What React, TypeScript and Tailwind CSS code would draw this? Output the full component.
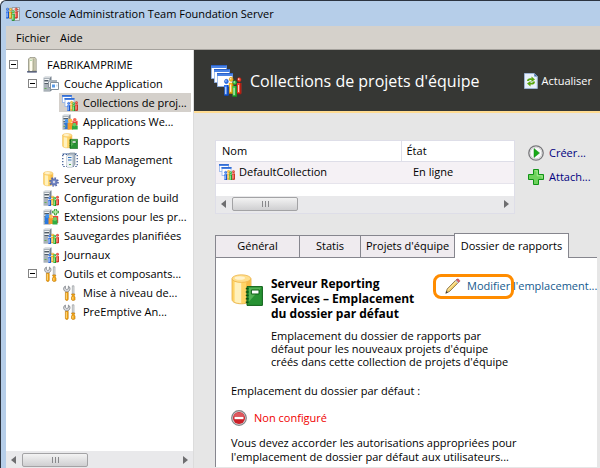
import { useState, ReactNode } from "react";
import clsx from "clsx";

type IconName =
  | "computer"
  | "tier"
  | "collections"
  | "webapps"
  | "reports"
  | "lab"
  | "proxy"
  | "build"
  | "extensions"
  | "tools";

interface TreeNode {
  label: string;
  icon: IconName;
  level: 0 | 1 | 2;
  expandable?: boolean;
}

const NODES: TreeNode[] = [
  { label: "FABRIKAMPRIME", icon: "computer", level: 0, expandable: true },
  { label: "Couche Application", icon: "tier", level: 1, expandable: true },
  { label: "Collections de proj...", icon: "collections", level: 2 },
  { label: "Applications We...", icon: "webapps", level: 2 },
  { label: "Rapports", icon: "reports", level: 2 },
  { label: "Lab Management", icon: "lab", level: 2 },
  { label: "Serveur proxy", icon: "proxy", level: 1 },
  { label: "Configuration de build", icon: "build", level: 1 },
  { label: "Extensions pour les pr...", icon: "extensions", level: 1 },
  { label: "Sauvegardes planifiées", icon: "build", level: 1 },
  { label: "Journaux", icon: "build", level: 1 },
  { label: "Outils et composants...", icon: "tools", level: 1, expandable: true },
  { label: "Mise à niveau de...", icon: "tools", level: 2 },
  { label: "PreEmptive An...", icon: "tools", level: 2 },
];

const TABS = [
  { label: "Général", width: "w-[84px]" },
  { label: "Statis", width: "w-[61px]" },
  { label: "Projets d'équipe", width: "w-[94px]" },
  { label: "Dossier de rapports", width: "w-[115px]" },
];

const INDENT = { 0: "pl-[3px]", 1: "pl-[22px]", 2: "pl-[41px]" };

// Small "i" shaped figure, 3 wide and 9 high
function Person({ x, y, fill, dark }: { x: number; y: number; fill: string; dark: string }) {
  return (
    <g transform={`translate(${x} ${y})`}>
      <path d="M0 3.2h2.8V9H.2V4.8H0z" fill={fill} />
      <path d="M2.4 3.2V9H.2" fill="none" stroke={dark} strokeWidth=".7" />
      <path d="M1.1 4.2v4" stroke="#fff" strokeOpacity=".75" strokeWidth=".7" />
      <circle cx="1.5" cy="1.3" r="1.2" fill={fill} stroke={dark} strokeWidth=".3" />
      <circle cx="1.2" cy="1" r=".45" fill="#fff" fillOpacity=".8" />
    </g>
  );
}

function Trio({ x = 5, y = 6 }: { x?: number; y?: number }) {
  return (
    <g transform={`translate(${x} ${y})`}>
      <Person x={2.9} y={0} fill="#f7b41c" dark="#d08600" />
      <Person x={0} y={0.9} fill="#2f74f0" dark="#0b43b0" />
      <Person x={7.8} y={0.2} fill="#f0402c" dark="#b01c10" />
      <Person x={5} y={1.2} fill="#3fc746" dark="#138321" />
    </g>
  );
}

function Tower() {
  return (
    <g>
      <path d="M.5 1.5H7v14.2H.5z" fill="#a9b1b8" />
      <path d="M2 .3h6.5L7 1.5H.5z" fill="#d5dade" />
      <path d="M7 1.5 8.5.3v14L7 15.7z" fill="#788490" />
      <path d="M1.5 3.5H6M1.5 6.5H6" stroke="#f3f5f6" />
      <path d="M1.5 4.5H6M1.5 7.5H6" stroke="#515c67" />
      <path d="M1.5 12.5h2" stroke="#64ac58" />
    </g>
  );
}

function Barrel() {
  return (
    <g>
      <path d="M.5 2.3v10.4c0 1.4 2.1 2.2 4.7 2.2s4.8-.8 4.8-2.2V2.3z" fill="#ffd466" stroke="#e5ad45" strokeWidth=".4" />
      <path d="M1.8 4v9.9c.9.5 2.2.7 3.3.7V4.2z" fill="#fff1bd" />
      <path d="M7.6 4.2v10.1c1.2-.3 2.1-.8 2.1-1.5V3z" fill="#f8ba48" />
      <ellipse cx="5.2" cy="2.3" rx="4.7" ry="1.9" fill="#ffdf8d" stroke="#eeb54c" strokeWidth=".4" />
      <ellipse cx="4.4" cy="2" rx="2.6" ry=".9" fill="#fff3cf" />
    </g>
  );
}

function Book() {
  return (
    <g>
      <path d="M8 6.3h7.7v9.4H8z" fill="#279233" stroke="#0d6017" strokeWidth=".5" />
      <path d="M9 6.8h6.2l-6.2 7z" fill="#73c76c" fillOpacity=".6" />
      <path d="M10.2 8h3.8v2h-3.8z" fill="#fff" stroke="#0d6017" strokeWidth=".5" />
      <path d="M7.4 7.3h1.4M7.4 9h1.4M7.4 10.7h1.4M7.4 12.4h1.4M7.4 14.1h1.4" stroke="#075411" strokeWidth=".7" />
    </g>
  );
}

function Sheet({ x, y, w, h, bar }: { x: number; y: number; w: number; h: number; bar: number }) {
  return (
    <g transform={`translate(${x} ${y})`}>
      <rect x=".4" y=".4" width={w} height={h} fill="#fff" stroke="#8fb2ea" strokeWidth=".8" />
      <rect width={w + 0.8} height={bar} fill="#4a83e4" />
      <rect width={w + 0.8} height={bar / 3} fill="#2c62c8" />
    </g>
  );
}

const ICONS: Record<IconName, ReactNode> = {
  computer: (
    <>
      <path d="M3.2 14h9.6v1.6H3.2z" fill="#4a5578" />
      <path d="M4.5 2 6 .4h5L12.2 2v12H4.5z" fill="#d7d5bd" stroke="#848472" strokeWidth=".7" />
      <path d="M6 2h2v12H6z" fill="#fffdf0" />
      <path d="M9.8 1.5v12.4" stroke="#a5a68e" strokeWidth="1.1" />
      <path d="M6.3 3.2h1.4" stroke="#64ad65" />
    </>
  ),
  tier: (
    <>
      <Tower />
      <path d="M5.5 4.5h8v7h-8z" fill="#edf0f2" stroke="#8a949d" />
      <path d="M5 4h9v2H5z" fill="#a9b2ba" />
      <path d="M7.5 6.5h8v7h-8z" fill="#fff" stroke="#84909b" />
      <path d="M9 8.5h3v3H9z" fill="#5a9ae6" />
      <path d="M13 8.5h1.5v2H13z" fill="#c8dbef" />
    </>
  ),
  collections: (
    <>
      <Sheet x={0} y={0} w={9} h={7} bar={2} />
      <Sheet x={2.6} y={3} w={9} h={8} bar={2} />
      <Trio x={5.2} y={6.2} />
    </>
  ),
  webapps: (
    <>
      <Tower />
      <g transform="translate(1.6 4)">
        <path d="M0 5h5v6H.8L2 8z" fill="#2e78d4" />
        <circle cx="3" cy="3" r="2" fill="#4c9af2" />
        <path d="M4 5h5.5v6.6H4z" fill="#f39b28" />
        <circle cx="6.6" cy="2.8" r="2.2" fill="#ffbd4c" />
        <path d="M8.8 2.8 11 3.8l3-1v4l-2 1.4-3-1z" fill="#ec3b32" />
        <circle cx="11.2" cy="1.8" r="1.8" fill="#f46355" />
        <path d="M8.4 7.5h5.7v4H8.4z" fill="#2daa43" />
        <circle cx="10.8" cy="6.6" r="1.8" fill="#64ce62" />
      </g>
    </>
  ),
  reports: (
    <>
      <Barrel />
      <Book />
    </>
  ),
  lab: (
    <>
      <path d="M.8 2.5h14.4v12H.8z" fill="none" stroke="#1d3f80" strokeWidth="1.1" strokeDasharray="1.2 1.8" />
      <path d="M.5 1.8H15" stroke="#7790b8" />
      <path d="M5 3.5 8 1h5v11.5L10.5 15H5z" fill="#aeb9c4" stroke="#687a8d" strokeWidth=".6" />
      <path d="M5 3.5h5.5V15H5z" fill="#eef2f5" />
      <path d="M6 5.5h3.5M6 8h3.5" stroke="#3277c2" />
      <path d="M7 12.5h2" stroke="#50a951" />
    </>
  ),
  proxy: (
    <>
      <Barrel />
      <circle cx="11" cy="11" r="3.2" fill="#6f84c4" stroke="#4c5fa4" strokeWidth=".5" />
      <circle cx="11" cy="11" r="4" fill="none" stroke="#5366aa" strokeWidth="1.6" strokeDasharray="1.57 1.57" />
      <circle cx="11" cy="11" r="1.4" fill="#fff" stroke="#4c5fa4" strokeWidth=".5" />
    </>
  ),
  build: (
    <>
      <Tower />
      <path d="M5 7.5h11V16H5z" fill="#fff" fillOpacity=".7" />
      <Trio x={5.2} y={5.8} />
    </>
  ),
  extensions: (
    <>
      <Tower />
      <path d="M1.8 8h5v7h-5z" fill="#2c79df" />
      <circle cx="4.2" cy="7" r="2.1" fill="#4393ee" />
      <path d="M5.5 9h5v6h-5z" fill="#f49b2c" />
      <circle cx="8" cy="7.5" r="2" fill="#ffc356" />
      <path d="M10 7h5.2v7H10z" fill="#e9473c" />
      <path d="M9.5 11h5v4.5h-5z" fill="#32ad45" />
      <circle cx="12" cy="10" r="2" fill="#6bd362" />
      <path d="M11.5 0h2v2h2v2h-2v2h-2V4h-2V2h2z" fill="#b8efa8" stroke="#218c25" strokeWidth=".7" />
    </>
  ),
  tools: (
    <>
      <path d="M3.4 1v2.4L4.8 4.6 6.4 3.6V1a3 3 0 0 1 .4 5.1L6 7H3.8L2.4 5.8A3 3 0 0 1 3.4 1z" fill="#d6d8dc" stroke="#71767c" strokeWidth=".7" />
      <path d="M3.4 7.3h2.8v7c0 1.6-2.8 1.6-2.8 0z" fill="#f7a817" stroke="#b97400" strokeWidth=".6" />
      <path d="M4.4 8v6" stroke="#ffe295" strokeWidth=".8" />
      <path d="M10.3.8h1.7v8.4h-1.7z" fill="#e5e7e9" stroke="#74797e" strokeWidth=".5" />
      <path d="M9.5 9h3.4l-.7 1.8.8 1.4v2.4c0 1.2-3.5 1.2-3.5 0v-2.4l.8-1.4z" fill="#f7a817" stroke="#b97400" strokeWidth=".6" />
      <path d="M10.8 12v2.5" stroke="#ffe295" strokeWidth=".8" />
    </>
  ),
};

function Icon({ name, className = "size-4" }: { name: IconName; className?: string }) {
  return (
    <svg viewBox="0 0 16 16" className={clsx("shrink-0", className)} aria-hidden="true">
      {ICONS[name]}
    </svg>
  );
}

function Arrow({ flip }: { flip?: boolean }) {
  return (
    <svg viewBox="0 0 5 8" className={clsx("h-2 w-[5px]", flip && "rotate-180")} aria-hidden="true">
      <path d="M5 0v8L0 4z" fill="#6e6e70" />
    </svg>
  );
}

function ScrollBar({ className }: { className?: string }) {
  return (
    <div className={clsx("flex h-[17px] items-center bg-[#e9e9eb] px-[5px]", className)}>
      <button aria-label="Défiler à gauche">
        <Arrow />
      </button>
      <div className="ml-[6px] flex h-[14px] w-[66px] items-center justify-center gap-[2px] rounded-xs border border-[#a3a3a5] bg-linear-to-b from-[#f3f3f3] to-[#cfcfd1]">
        <i className="h-[6px] w-px bg-[#88888b]" />
        <i className="h-[6px] w-px bg-[#88888b]" />
        <i className="h-[6px] w-px bg-[#88888b]" />
      </div>
      <button aria-label="Défiler à droite" className="ml-auto">
        <Arrow flip />
      </button>
    </div>
  );
}

function Tree({ selected, onSelect }: { selected: string; onSelect: (label: string) => void }) {
  return (
    <ul className="flex-1 pt-[5px]">
      {NODES.map((node) => (
        <li key={node.label} className={clsx("flex h-[19px] items-center pr-[2px]", INDENT[node.level])}>
          {node.expandable ? (
            <button
              aria-label={`Réduire ${node.label}`}
              className="flex size-[9px] shrink-0 items-center justify-center border border-[#848484] bg-white"
            >
              <i className="h-px w-[5px] bg-black" />
            </button>
          ) : (
            <span className="w-[9px] shrink-0" />
          )}
          <button
            onClick={() => onSelect(node.label)}
            className={clsx(
              "ml-[3px] flex h-full min-w-0 flex-1 items-center whitespace-nowrap pl-[3px]",
              node.level === 0 ? "gap-[7px]" : "gap-[5px]",
              selected === node.label && "bg-[#d4d0cb]"
            )}
          >
            <Icon name={node.icon} />
            {node.label}
          </button>
        </li>
      ))}
    </ul>
  );
}

export default function App() {
  const [selected, setSelected] = useState("Collections de proj...");
  const [tab, setTab] = useState("Dossier de rapports");

  return (
    <div className="flex min-h-screen flex-col rounded-tl-md border-l border-t border-[#2c3440] bg-[#b6cee9] pl-[5px] font-['Open_Sans','Noto_Sans',sans-serif] text-[11px] leading-4 text-black">
      {/* Title bar */}
      <header className="flex h-[25px] items-center gap-[5px]">
        <svg viewBox="0 0 16 16" className="size-[14px]" aria-hidden="true">
          <path d="M7 .5h8.5v15H7z" fill="#e6e8e9" stroke="#8a949b" />
          <path d="M12 3h2.5M12 5h2.5" stroke="#69747a" />
          <g transform="translate(0 1) scale(1.2 1.3)">
            <Person x={2.8} y={0.2} fill="#f3b51f" dark="#b97700" />
            <Person x={0} y={0} fill="#3478ef" dark="#0b43b0" />
            <Person x={8.2} y={0} fill="#ee4a32" dark="#b01c10" />
            <Person x={5.4} y={2} fill="#50cb55" dark="#138321" />
          </g>
        </svg>
        <h1>Console Administration Team Foundation Server</h1>
      </header>

      {/* Menu */}
      <nav className="flex h-6 items-center gap-[10px] border-b border-[#a5a29d] bg-[#d5d1cb] pl-[10px]">
        <button>Fichier</button>
        <button>Aide</button>
      </nav>

      <div className="flex flex-1">
        <aside className="flex w-[187px] shrink-0 flex-col bg-white">
          <Tree selected={selected} onSelect={setSelected} />
          <ScrollBar />
        </aside>

        <main className="flex min-w-0 flex-1 flex-col border-l border-[#dcdcdc] bg-[#e6e6e6]">
          <div className="flex h-[63px] items-center border-b-2 border-[#ffdc92] bg-[#363734] pl-[17px] pr-2 text-white">
            <svg viewBox="0 0 32 32" className="size-8 shrink-0" aria-hidden="true">
              <Sheet x={0} y={0} w={15} h={13} bar={3} />
              <Sheet x={3} y={4} w={15} h={13} bar={3} />
              <Sheet x={6} y={8} w={15} h={13} bar={3} />
              <g transform="translate(13 12) scale(1.6 1.8)">
                <Person x={3} y={0} fill="#f7b41c" dark="#d08600" />
                <Person x={0} y={1.2} fill="#2f74f0" dark="#0b43b0" />
                <Person x={8} y={0.2} fill="#f0402c" dark="#b01c10" />
                <Person x={5.2} y={1.8} fill="#3fc746" dark="#138321" />
              </g>
            </svg>
            <h2 className="ml-[7px] whitespace-nowrap text-[16px] leading-6">Collections de projets d'équipe</h2>
            <button className="ml-auto flex items-center gap-1 whitespace-nowrap">
              <svg viewBox="0 0 14 16" className="h-4 w-[14px]" aria-hidden="true">
                <path d="M.5.5h9.8l3 3v12H.5z" fill="#e7effb" stroke="#9bb2d3" />
                <path d="M10.3.5v3h3z" fill="#3f6da5" />
                <path d="M3 8c0-2.5 2.5-3.2 4.5-2.6V3.6L11 6.4 7.5 9V7.2C6 6.9 5 7.4 5 8zM11 8.4c0 2.8-2.5 3.6-4.5 3v2L3 10.6 6.5 8v1.7c1.5.3 2.5-.2 2.5-1.3z" fill="#59a50d" />
              </svg>
              Actualiser
            </button>
          </div>

          <div className="flex flex-1 flex-col pb-px pl-[21px] pr-[3px] pt-[27px]">
            {/* Collections list */}
            <div className="flex gap-[13px]">
              <div className="min-w-0 flex-1 border border-[#dedee8] bg-white">
                <table className="w-full table-fixed text-left">
                  <thead>
                    <tr className="h-5 border-b border-[#dedee8]">
                      <th className="w-[185px] border-r border-[#dedee8] pl-[6px] font-normal">Nom</th>
                      <th className="pl-[5px] font-normal">État</th>
                    </tr>
                  </thead>
                  <tbody>
                    <tr className="h-[22px] border-b border-[#e6e4ec] bg-[#f5f1f5]">
                      <td className="pl-[3px]">
                        <span className="flex items-center gap-1">
                          <Icon name="collections" />
                          DefaultCollection
                        </span>
                      </td>
                      <td className="pl-3">En ligne</td>
                    </tr>
                  </tbody>
                </table>
                <ScrollBar className="mt-[12px]" />
              </div>
              <div className="flex w-[69px] shrink-0 flex-col gap-2 pt-[5px] text-[#000080]">
                <a href="#creer" className="flex items-center gap-[5px]">
                  <svg viewBox="0 0 16 16" className="size-4 shrink-0" aria-hidden="true">
                    <circle cx="8" cy="8" r="7.2" fill="#eeeeee" stroke="#77777a" strokeWidth="1.3" />
                    <circle cx="8" cy="8" r="5.8" fill="#f8f8f8" stroke="#c8c8ca" strokeWidth=".7" />
                    <path d="M6 3.5 11.5 8 6 12.5z" fill="#18aa16" stroke="#0b8510" strokeWidth=".5" />
                  </svg>
                  Créer...
                </a>
                <a href="#attacher" className="flex items-center gap-[5px]">
                  <svg viewBox="0 0 16 16" className="size-4 shrink-0" aria-hidden="true">
                    <path d="M5.5.5h5v5h5v5h-5v5h-5v-5h-5v-5h5z" fill="#6ed25c" stroke="#109317" />
                    <path d="M6.8 1.8h2.4v5h5v2.4" fill="none" stroke="#aff09b" strokeWidth=".8" />
                  </svg>
                  Attach...
                </a>
              </div>
            </div>

            {/* Tabs */}
            <div role="tablist" className="mt-[19px] flex h-[25px] items-end">
              {TABS.map(({ label, width }) => (
                <button
                  key={label}
                  role="tab"
                  aria-selected={tab === label}
                  onClick={() => setTab(label)}
                  className={clsx(
                    "shrink-0 whitespace-nowrap border-l border-t border-[#86868e]",
                    width,
                    tab === label ? "h-[25px] border-r bg-white" : "h-[23px] border-b bg-[#efebef]"
                  )}
                >
                  {label}
                </button>
              ))}
              <div className="h-px flex-1 bg-[#86868e]" />
            </div>

            <section role="tabpanel" className="flex-1 border-l border-[#86868e] bg-white pb-[3px] pl-[15px] pt-4">
              <div className="flex">
                <svg viewBox="0 0 16 16" className="size-8 shrink-0" aria-hidden="true">
                  <Barrel />
                  <Book />
                </svg>
                <h3 className="ml-2 mt-[2px] w-[162px] shrink-0 whitespace-nowrap text-[12px] font-bold leading-[15px]">
                  Serveur Reporting
                  <br />
                  Services – Emplacement
                  <br />
                  du dossier par défaut
                </h3>
                <div className="relative flex h-6 items-center">
                  <a href="#emplacement" className="flex items-center gap-[6px] whitespace-nowrap pl-3 text-[#145a8e]">
                    <svg viewBox="0 0 16 16" className="size-4 shrink-0" aria-hidden="true">
                      <path d="m2.2 11 8.9-9.2 2.6 2.4L4.6 13.4.8 15.3z" fill="#f5cf69" stroke="#77603a" strokeWidth=".8" />
                      <path d="m3 11.8 8.6-8.8" stroke="#fff0b5" />
                      <path d="m11 2.1 1-1c1-.9 3.4 1.3 2.6 2.4l-1 1z" fill="#e55b64" stroke="#9b4148" strokeWidth=".6" />
                      <path d="m10 3.1 1-1 2.6 2.4-.9 1z" fill="#c9cdd2" />
                      <path d="m.8 15.3.7-2.2 1.4 1.2z" fill="#303030" />
                    </svg>
                    Modifier l'emplacement...
                  </a>
                  <span className="pointer-events-none absolute left-0 top-0 h-[25px] w-[81px] rounded-lg border-3 border-[#ff8c00]" />
                </div>
              </div>
              <p className="ml-10 mt-2 leading-[13px]">
                Emplacement du dossier de rapports par
                <br />
                défaut pour les nouveaux projets d'équipe
                <br />
                créés dans cette collection de projets d'équipe
              </p>
              <p className="mt-[15px]">Emplacement du dossier par défaut :</p>
              <p className="mt-[11px] flex items-center gap-[7px] text-[#f00000]">
                <svg viewBox="0 0 16 16" className="size-4" aria-hidden="true">
                  <circle cx="8" cy="8" r="7.3" fill="#d9d9dc" stroke="#838386" strokeWidth="1.2" />
                  <circle cx="8" cy="8" r="6" fill="#cc2028" />
                  <path d="M2.6 6.5a5.6 5.6 0 0 1 10.8 0z" fill="#e57075" fillOpacity=".7" />
                  <path d="M3.5 6.8h9v2.4h-9z" fill="#fff" />
                </svg>
                Non configuré
              </p>
              <p className="mt-[10px] leading-[14px]">
                Vous devez accorder les autorisations appropriées pour
                <br />
                l'emplacement de dossier par défaut aux utilisateurs...
              </p>
            </section>
          </div>
        </main>
      </div>
    </div>
  );
}
